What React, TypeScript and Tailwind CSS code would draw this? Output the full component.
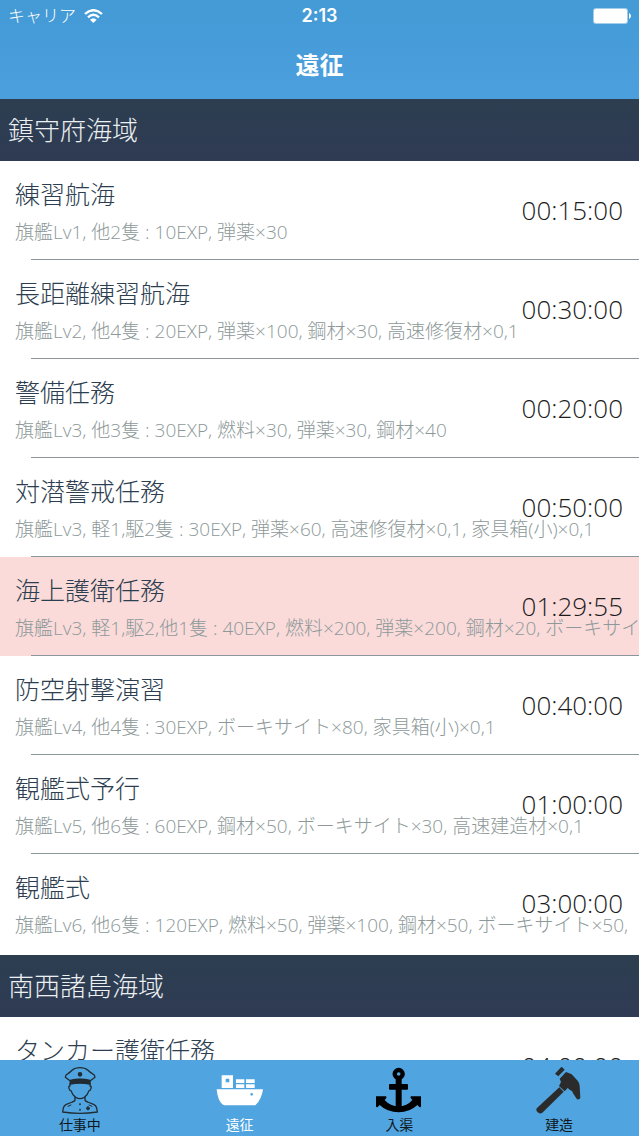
import { useState } from 'react';

type Mission = {
    name: string;
    detail: string;
    time: string;
    active?: boolean;
};

type Area = {
    name: string;
    missions: Mission[];
};

const areas: Area[] = [
    {
        name: '鎮守府海域',
        missions: [
            { name: '練習航海', detail: '旗艦Lv1, 他2隻 : 10EXP, 弾薬×30', time: '00:15:00' },
            { name: '長距離練習航海', detail: '旗艦Lv2, 他4隻 : 20EXP, 弾薬×100, 鋼材×30, 高速修復材×0,1', time: '00:30:00' },
            { name: '警備任務', detail: '旗艦Lv3, 他3隻 : 30EXP, 燃料×30, 弾薬×30, 鋼材×40', time: '00:20:00' },
            { name: '対潜警戒任務', detail: '旗艦Lv3, 軽1,駆2隻 : 30EXP, 弾薬×60, 高速修復材×0,1, 家具箱(小)×0,1', time: '00:50:00' },
            { name: '海上護衛任務', detail: '旗艦Lv3, 軽1,駆2,他1隻 : 40EXP, 燃料×200, 弾薬×200, 鋼材×20, ボーキサイト×20', time: '01:29:55', active: true },
            { name: '防空射撃演習', detail: '旗艦Lv4, 他4隻 : 30EXP, ボーキサイト×80, 家具箱(小)×0,1', time: '00:40:00' },
            { name: '観艦式予行', detail: '旗艦Lv5, 他6隻 : 60EXP, 鋼材×50, ボーキサイト×30, 高速建造材×0,1', time: '01:00:00' },
            { name: '観艦式', detail: '旗艦Lv6, 他6隻 : 120EXP, 燃料×50, 弾薬×100, 鋼材×50, ボーキサイト×50,', time: '03:00:00' },
        ],
    },
    {
        name: '南西諸島海域',
        missions: [{ name: 'タンカー護衛任務', detail: '旗艦Lv3, 軽1,駆2,他1隻', time: '04:00:00' }],
    },
];

const iconProps = { viewBox: '48 32 144 144', className: 'h-12 w-12', 'aria-hidden': true };

function OfficerIcon() {
    return (
        <svg {...iconProps} fill="none" stroke="#222c33" strokeWidth="4" strokeLinejoin="round" strokeLinecap="round">
            <path d="M91 77 L76 66 Q76 59 84 55 Q90 51 96 45 Q105 37 120 37 Q135 37 144 45 Q150 51 157 55 Q165 59 165 66 L150 77 Q120 67 91 77Z" />
            <path d="M91 75 Q120 68 150 75 V86 Q120 81 91 86Z" fill="#222c33" />
            <path d="M90 84 V92 Q85 92 87 99 Q89 106 93 106 Q97 119 107 126 Q120 134 133 126 Q143 119 147 106 Q151 106 153 99 Q155 92 150 92 V84" />
            <path d="M105 126 V134 Q104 138 97 140 L79 147 Q72 150 70 158 L68 170 Q94 174 120 174 Q146 174 172 170 L170 158 Q168 150 161 147 L143 140 Q136 138 135 134 V126" />
            <path d="M84 153 L93 149 M156 153 L147 149" strokeWidth="3" />
            <path d="M144 153 V165 M138 159 H150" strokeWidth="5" strokeLinecap="butt" />
            <circle cx="120" cy="57" r="5" fill="#222c33" />
            <circle cx="120" cy="147" r="1" />
            <circle cx="120" cy="163" r="1" />
        </svg>
    );
}

function ShipIcon() {
    return (
        <svg {...iconProps} fill="white" fillRule="evenodd">
            <path d="M65 60 H99 V98 H65Z M77 70 V81 H88 V70Z" />
            <path d="M108 72 H133 V83 H108Z M138 72 H164 V83 H138Z M108 87 H133 V98 H108Z M138 87 H164 V98 H138Z" />
            <path d="M50 102 H189 Q188 114 182 127 Q176 141 166 150 H73 Q62 145 56 130 Q51 118 50 102Z M155 113 A4 4 0 1 0 155 121 A4 4 0 1 0 155 113Z" />
        </svg>
    );
}

function AnchorIcon() {
    return (
        <svg {...iconProps} fill="black">
            <circle cx="119" cy="56" r="12" fill="none" stroke="black" strokeWidth="13" />
            <path d="M110 70 H128 V158 H110Z" />
            <path d="M93 86 H144 Q147 86 147 89 V100 Q147 103 144 103 H93 Q90 103 90 100 V89 Q90 86 93 86Z" />
            <path d="M51 123 H80 Q84 124 82 128 L77 134 Q94 153 119 153 Q144 153 160 134 L155 128 Q153 124 157 123 H186 V153 Q185 157 181 155 L175 149 Q152 171 119 171 Q85 171 62 149 L56 155 Q52 157 51 153Z" />
        </svg>
    );
}

function HammerIcon() {
    return (
        <svg {...iconProps} fill="#2b2b2b">
            <path d="M108 55 L126 36 Q129 34 131 37 L137 43 L118 63Z" />
            <path d="M122 70 L141 50 L149 53 L158 57 L176 76 Q181 82 182 91 L184 127 Q182 134 174 132 L163 115 Q161 106 153 104 L146 98 L137 108 L120 92 L126 80Z" />
            <path d="M121 96 L134 109 L70 172 Q63 177 56 171 Q49 164 54 158Z" />
        </svg>
    );
}

const tabs = [
    { label: '仕事中', Icon: OfficerIcon },
    { label: '遠征', Icon: ShipIcon },
    { label: '入渠', Icon: AnchorIcon },
    { label: '建造', Icon: HammerIcon },
];

function StatusBar() {
    return (
        <div className="grid h-8 grid-cols-3 items-center px-2 text-lg">
            <div className="flex items-center gap-2">
                <span className="text-[17px] font-light">キャリア</span>
                <svg viewBox="0 0 57 42" className="h-[14px] w-[19px]" fill="none" stroke="white" strokeWidth="7">
                    <path d="M3 15 Q28 -8 54 15" />
                    <path d="M12 25 Q28 10 45 25" />
                    <path d="M28 42 L18 32 Q28 23 38 32Z" fill="white" stroke="none" />
                </svg>
            </div>
            <time className="text-center font-['Inter'] font-semibold">2:13</time>
            <svg viewBox="0 0 38 16" className="h-4 w-[38px] justify-self-end" fill="white">
                <rect x="0" y="0" width="35" height="16" rx="3" opacity="0.5" />
                <rect x="1" y="1" width="33" height="14" rx="2" />
                <path d="M36 5 Q38 6 38 8 Q38 10 36 11Z" />
            </svg>
        </div>
    );
}

function MissionRow({ mission }: { mission: Mission }) {
    return (
        <li className={mission.active ? 'group grid h-[99px] grid-cols-1 bg-[#fadbd9]' : 'group grid h-[99px] grid-cols-1'}>
            <div className="col-start-1 row-start-1 min-w-0 overflow-hidden pt-[15px] pl-[15px] whitespace-nowrap">
                <h3 className="text-[25px] leading-9 text-[#2c3e50]">{mission.name}</h3>
                <p className="text-[19px] leading-10 text-[#8d9999]">{mission.detail}</p>
            </div>
            <time className="col-start-1 row-start-1 self-center justify-self-end pr-4 text-[26px] text-[#1c1c1c]">{mission.time}</time>
            <div className="col-start-1 row-start-1 ml-[31px] self-end border-b border-[#8b959c] group-last:hidden" />
        </li>
    );
}

export default function App() {
    const [selected, setSelected] = useState('遠征');

    return (
        <div className="flex h-screen flex-col bg-white font-['Open_Sans','Noto_Sans_CJK_JP',sans-serif] font-light">
            <header className="bg-linear-to-b from-[#439ad5] to-[#4b9fdd] text-white">
                <StatusBar />
                <h1 className="h-[67px] text-center text-2xl leading-[66px] font-bold">遠征</h1>
            </header>

            <main className="min-h-0 flex-1 overflow-y-auto [scrollbar-width:none]">
                {areas.map((area) => (
                    <section key={area.name}>
                        <h2 className="h-[62px] bg-linear-to-b from-[#2c3e50] to-[#2f3b54] px-2 text-[26px] leading-[62px] text-[#ecf0f1]">
                            {area.name}
                        </h2>
                        <ul className="pb-0.5">
                            {area.missions.map((mission) => (
                                <MissionRow key={mission.name} mission={mission} />
                            ))}
                        </ul>
                    </section>
                ))}
            </main>

            <nav className="grid h-[76px] grid-cols-4 bg-[#50a5e1]">
                {tabs.map(({ label, Icon }) => (
                    <button
                        key={label}
                        type="button"
                        onClick={() => setSelected(label)}
                        className={
                            selected === label
                                ? 'flex flex-col items-center pt-1.5 text-sm font-normal text-white'
                                : 'flex flex-col items-center pt-1.5 text-sm font-normal text-[#111820]'
                        }
                    >
                        <Icon />
                        <span className="leading-[22px]">{label}</span>
                    </button>
                ))}
            </nav>
        </div>
    );
}
